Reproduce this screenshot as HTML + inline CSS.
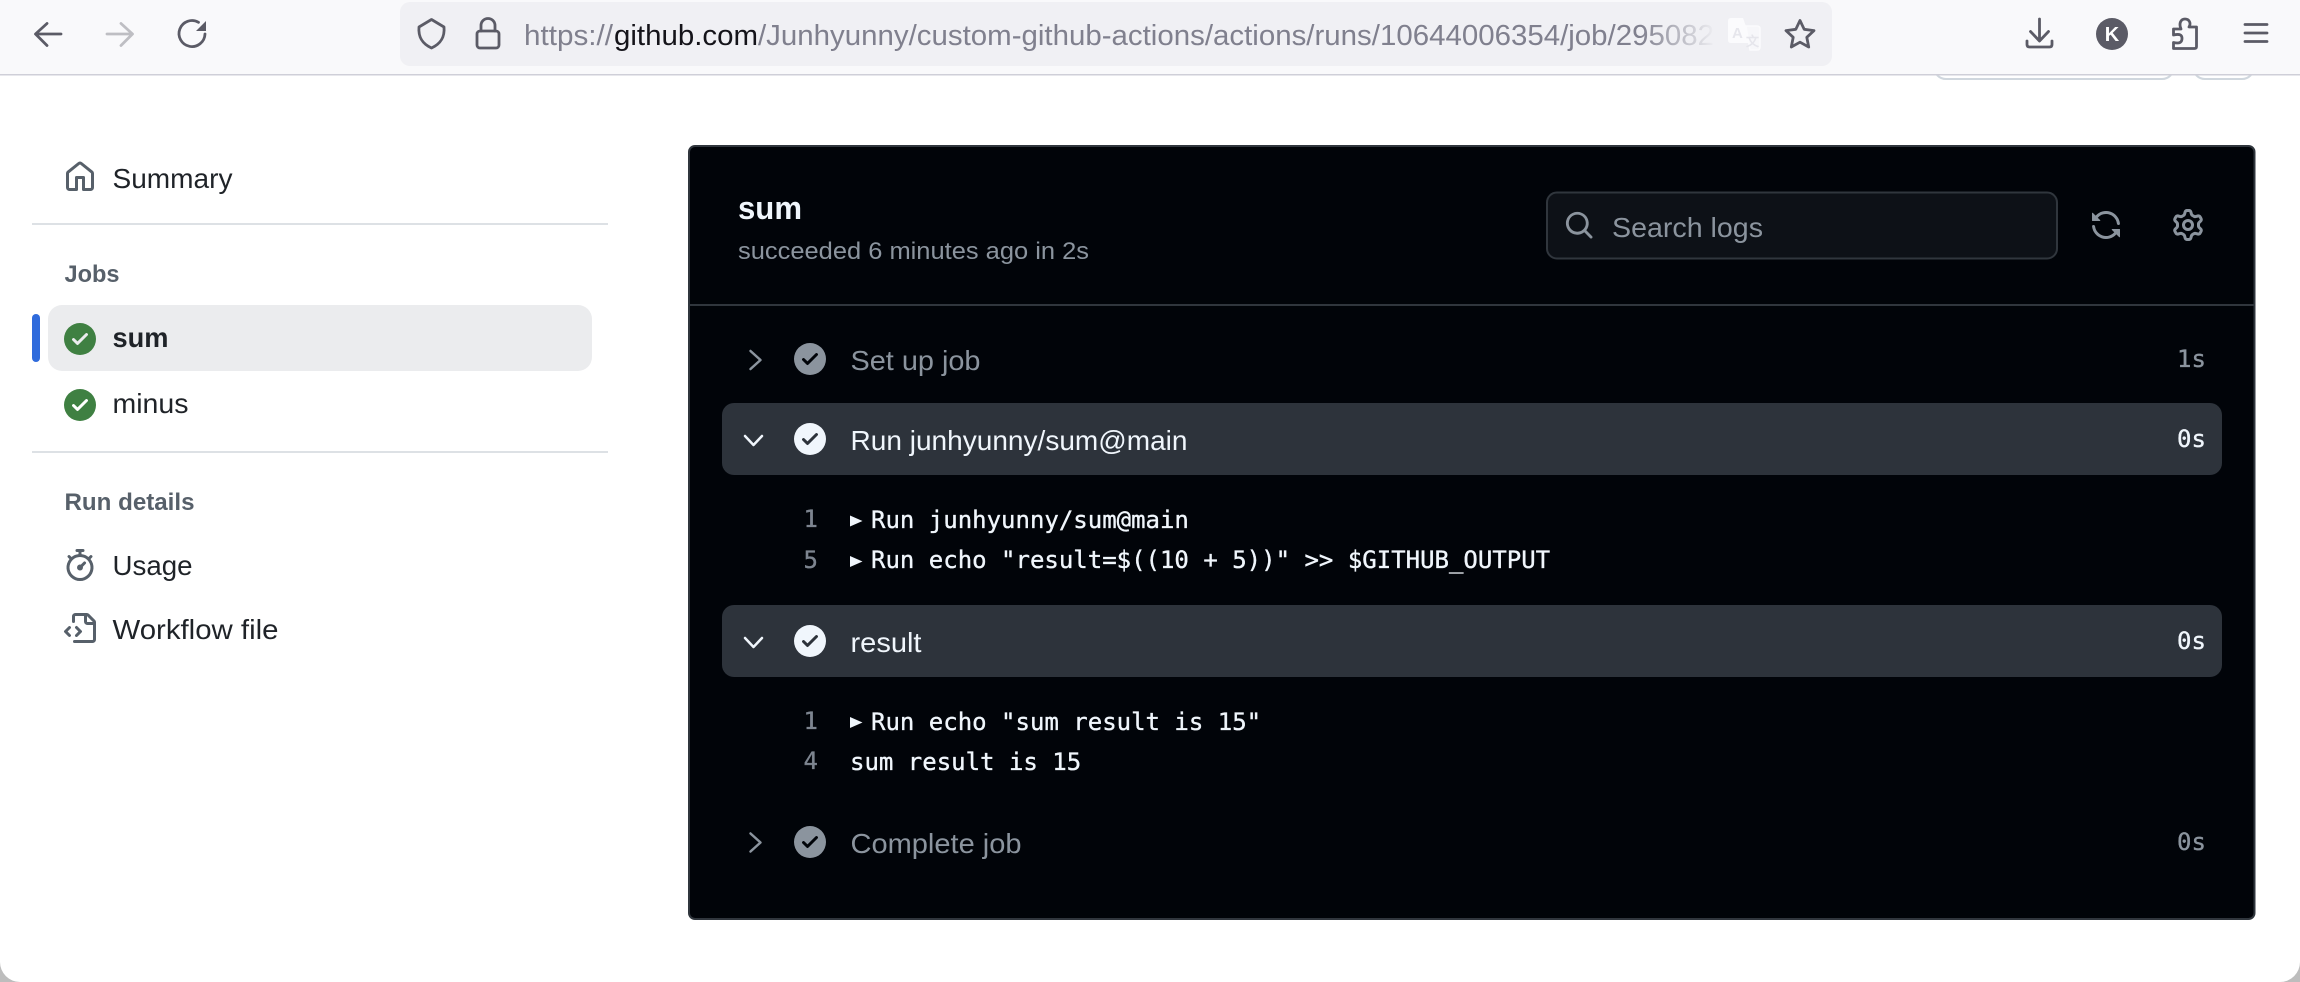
<!DOCTYPE html>
<html lang="en">
<head>
<meta charset="utf-8">
<title>sum · Junhyunny/custom-github-actions</title>
<style>
html,body{margin:0;padding:0;width:2300px;height:982px;overflow:hidden;background:#fff}
svg{display:block}
text{font-family:"Liberation Sans",sans-serif;white-space:pre}
.mono{font-family:"DejaVu Sans Mono","Liberation Mono",monospace;font-size:24px;stroke-width:.35}
.nav{font-size:28px;fill:#1f2328}
.head{font-size:24px;font-weight:700;fill:#57606a}
.step{font-size:28px}
.tb{fill:none;stroke:#5b5b66;stroke-width:2.8;stroke-linecap:round;stroke-linejoin:round}
.lg{fill:#f0f6fc;stroke:#f0f6fc}
.ln{fill:#7d8590;stroke:#7d8590}
.dim{fill:#8b949e;stroke:#8b949e}
</style>
</head>
<body>
<svg xmlns="http://www.w3.org/2000/svg" width="2300" height="982" viewBox="0 0 2300 982">
<defs>
<linearGradient id="fade" gradientUnits="userSpaceOnUse" x1="1640" y1="0" x2="1716" y2="0">
<stop offset="0" stop-color="#80808e"/><stop offset="1" stop-color="#f0f0f4"/>
</linearGradient>
<path id="chk" d="M8 16A8 8 0 1 1 8 0a8 8 0 0 1 0 16Zm3.78-9.72a.751.751 0 0 0-.018-1.042.751.751 0 0 0-1.042-.018L6.75 9.19 5.28 7.72a.751.751 0 0 0-1.042.018.751.751 0 0 0-.018 1.042l2 2a.75.75 0 0 0 1.06 0Z"/>
</defs>

<rect width="2300" height="982" fill="#fff"/>

<!-- page buttons peeking under the toolbar -->
<rect x="1934" y="40" width="240" height="39" rx="12" fill="#fff" stroke="#d0d7de" stroke-width="2"/>
<rect x="2193" y="40" width="61" height="39" rx="12" fill="#fff" stroke="#d0d7de" stroke-width="2"/>

<!-- browser toolbar -->
<rect width="2300" height="74" fill="#f9f9fb"/>
<rect y="74" width="2300" height="1.5" fill="#cfcfd8"/>
<g class="tb">
<path d="M36 34H61M47 23.5 35.5 34 47 45.5"/>
<path d="M107 34H132M121 23.5 132.5 34 121 45.5" stroke="#bebec3"/>
<path d="M198.500 22.300A13 13 0 1 0 205 34"/>
</g>
<path d="M206 21V31H196Z" fill="#5b5b66"/>

<!-- url bar -->
<rect x="400" y="2" width="1432" height="64" rx="10" fill="#f0f0f4"/>
<g class="tb">
<path d="M419 27 431.500 19.500 444 27C445 38 440 44 431.500 48C423 44 418 38 419 27Z"/>
<rect x="477" y="31" width="22" height="17" rx="3"/>
<path d="M481 31V25.500a7 7 0 0 1 14 0V31"/>
</g>
<text x="524" y="45" font-size="29" fill="#80808e" textLength="89" lengthAdjust="spacingAndGlyphs">https://</text>
<text x="614" y="45" font-size="29" fill="#15141a" textLength="144" lengthAdjust="spacingAndGlyphs">github.com</text>
<text x="758" y="45" font-size="29" fill="url(#fade)" textLength="956" lengthAdjust="spacingAndGlyphs">/Junhyunny/custom-github-actions/actions/runs/10644006354/job/295082</text>

<!-- translate icon -->
<path d="M1731 18H1743L1752 43H1731Q1728 43 1728 40V21Q1728 18 1731 18Z" fill="#fbfbfd"/>
<path d="M1746 26H1757Q1760 26 1760 29V47Q1760 50 1757 50H1750Z" fill="#f7f7fa" stroke="#fbfbfd" stroke-width="1.500"/>
<text x="1732" y="38" font-size="15" font-weight="700" fill="#e6e6ec">A</text>
<text x="1746" y="46" font-size="13" font-weight="700" fill="#e6e6ec">文</text>

<!-- star -->
<path class="tb" d="M1800 20.500 1804.200 29.300 1814 30.600 1806.800 37.300 1808.700 47 1800 42.200 1791.300 47 1793.200 37.300 1786 30.600 1795.800 29.300Z"/>

<!-- right toolbar -->
<g class="tb">
<path d="M2039.500 19V40M2030.500 31.500 2039.500 41 2048.500 31.500"/>
<path d="M2027 41V44.500Q2027 47 2029.500 47H2049.500Q2052 47 2052 44.500V41"/>
<path d="M2173.500 48.500V42.500C2180 44 2182 42 2182 38.500C2182 35 2180 33.500 2173.500 35V29H2181C2178.500 23 2181 19 2185 19C2189 19 2191.500 23 2189 27H2196.500V46.500Q2196.500 48.500 2194.500 48.500Z"/>
<path d="M2245 24.500H2267M2245 33H2267M2245 41.500H2267"/>
</g>
<circle cx="2112" cy="34" r="16" fill="#5b5b66"/>
<text x="2112" y="41" font-size="20" font-weight="700" fill="#fff" text-anchor="middle">K</text>

<!-- sidebar -->
<g transform="translate(64 161) scale(2)" fill="#57606a"><path d="M6.906.664a1.749 1.749 0 0 1 2.187 0l5.25 4.2c.415.332.657.835.657 1.367v7.019A1.75 1.75 0 0 1 13.25 15h-3.5a.75.75 0 0 1-.75-.75V9H7v5.25a.75.75 0 0 1-.75.75h-3.5A1.75 1.75 0 0 1 1 13.250V6.230c0-.531.242-1.034.657-1.366l5.250-4.200Zm1.250 1.171a.25.25 0 0 0-.312 0l-5.250 4.200a.25.25 0 0 0-.094.196v7.019c0 .138.112.25.25.25H5.500V8.250a.75.75 0 0 1 .75-.75h3.500a.75.75 0 0 1 .75.75v5.250h2.750a.25.25 0 0 0 .25-.25V6.230a.25.25 0 0 0-.094-.195Z"/></g>
<text class="nav" x="112.500" y="188" textLength="120" lengthAdjust="spacingAndGlyphs">Summary</text>
<rect x="32" y="223" width="576" height="2" fill="#dde1e5"/>
<text class="head" x="64.500" y="282" textLength="55" lengthAdjust="spacingAndGlyphs">Jobs</text>
<rect x="48" y="305" width="544" height="66" rx="14" fill="#ebecee"/>
<rect x="32" y="314" width="8" height="48" rx="4" fill="#2f6bdc"/>
<use href="#chk" transform="translate(64 323) scale(2)" fill="#3f8042"/>
<text class="nav" x="112.500" y="347" font-weight="700" textLength="56" lengthAdjust="spacingAndGlyphs">sum</text>
<use href="#chk" transform="translate(64 389) scale(2)" fill="#3f8042"/>
<text class="nav" x="112.500" y="413" textLength="76" lengthAdjust="spacingAndGlyphs">minus</text>
<rect x="32" y="451" width="576" height="2" fill="#dde1e5"/>
<text class="head" x="64.500" y="510" textLength="130" lengthAdjust="spacingAndGlyphs">Run details</text>
<g transform="translate(64 549) scale(2)" fill="#57606a"><path d="M5.750.750A.75.75 0 0 1 6.500 0h3a.75.75 0 0 1 0 1.500h-.75v1l-.001.041a6.724 6.724 0 0 1 3.464 1.435l.007-.006.75-.75a.751.751 0 0 1 1.042.018.751.751 0 0 1 .018 1.042l-.75.75-.006.007a6.750 6.750 0 1 1-10.548 0L2.720 5.030l-.75-.75a.751.751 0 0 1 .018-1.042.751.751 0 0 1 1.042-.018l.75.75.007.006A6.720 6.720 0 0 1 7.250 2.541V1.500H6.500a.75.75 0 0 1-.75-.75ZM8 14.500a5.250 5.250 0 1 0-.001-10.501A5.250 5.250 0 0 0 8 14.500Zm.389-6.700 1.330-1.330a.75.75 0 1 1 1.061 1.060L9.450 8.861A1.503 1.503 0 0 1 8 10.750a1.499 1.499 0 1 1 .389-2.950Z"/></g>
<text class="nav" x="112.500" y="575" textLength="80" lengthAdjust="spacingAndGlyphs">Usage</text>
<g transform="translate(64 613) scale(2)" fill="#57606a"><path d="M4 1.750C4 .784 4.784 0 5.750 0h5.586c.464 0 .909.184 1.237.513l2.914 2.914c.329.328.513.773.513 1.237v8.586A1.750 1.750 0 0 1 14.250 15h-9a.75.75 0 0 1 0-1.500h9a.25.25 0 0 0 .25-.25V6h-2.750A1.750 1.750 0 0 1 10 4.250V1.500H5.750a.25.25 0 0 0-.25.25v2.500a.75.75 0 0 1-1.500 0Zm1.720 4.970a.75.75 0 0 1 1.060 0l2 2a.75.75 0 0 1 0 1.060l-2 2a.749.749 0 0 1-1.275-.326.749.749 0 0 1 .215-.734l1.470-1.470-1.470-1.470a.75.75 0 0 1 0-1.060ZM3.280 7.780 1.810 9.250l1.470 1.470a.751.751 0 0 1-.018 1.042.751.751 0 0 1-1.042.018l-2-2a.75.75 0 0 1 0-1.060l2-2a.751.751 0 0 1 1.042.018.751.751 0 0 1 .018 1.042Zm8.220-6.218V4.250c0 .138.112.25.25.25h2.688l-.011-.013-2.914-2.914-.013-.011Z"/></g>
<text class="nav" x="112.500" y="639" textLength="166" lengthAdjust="spacingAndGlyphs">Workflow file</text>

<!-- log panel -->
<rect x="689" y="146" width="1565.500" height="773" rx="6" fill="#010409" stroke="#30363d" stroke-width="2"/>
<text x="738" y="219" font-size="32" font-weight="700" fill="#f0f6fc" textLength="64" lengthAdjust="spacingAndGlyphs">sum</text>
<text x="738" y="259" font-size="24" fill="#8b949e" textLength="351" lengthAdjust="spacingAndGlyphs">succeeded 6 minutes ago in 2s</text>
<rect x="690" y="304" width="1564" height="2" fill="#30363d"/>

<!-- search -->
<rect x="1547" y="192.500" width="510" height="66" rx="10" fill="#0d1117" stroke="#30363d" stroke-width="2"/>
<g transform="translate(1564 210) scale(1.900)" fill="#8b949e"><path d="M10.680 11.740a6 6 0 0 1-7.922-8.982 6 6 0 0 1 8.982 7.922l3.040 3.040a.749.749 0 0 1-.326 1.275.749.749 0 0 1-.734-.215ZM11.500 7a4.499 4.499 0 1 0-8.997 0A4.499 4.499 0 0 0 11.500 7Z"/></g>
<text x="1612" y="237" font-size="28" fill="#8b949e" textLength="151" lengthAdjust="spacingAndGlyphs">Search logs</text>
<g transform="translate(2090 209) scale(2)" fill="#8b949e"><path d="M1.705 8.005a.75.75 0 0 1 .834.656 5.500 5.500 0 0 0 9.592 2.970l-1.204-1.204a.25.25 0 0 1 .177-.427h3.646a.25.25 0 0 1 .25.25v3.646a.25.25 0 0 1-.427.177l-1.380-1.380A7.002 7.002 0 0 1 1.050 8.840a.75.75 0 0 1 .656-.834ZM8 2.500a5.487 5.487 0 0 0-4.131 1.869l1.204 1.204A.25.25 0 0 1 4.896 6H1.250A.25.25 0 0 1 1 5.750V2.104a.25.25 0 0 1 .427-.177l1.380 1.380A7.002 7.002 0 0 1 14.950 7.160a.75.75 0 0 1-1.490.178A5.500 5.500 0 0 0 8 2.500Z"/></g>
<g transform="translate(2172 209) scale(2)" fill="#8b949e"><path d="M8 0a8.200 8.200 0 0 1 .701.031C9.444.095 9.990.645 10.160 1.290l.288 1.107c.018.066.079.158.212.224.231.114.454.243.668.386.123.082.233.09.299.071l1.103-.303c.644-.176 1.392.021 1.820.63.27.385.506.792.704 1.218.315.675.111 1.422-.364 1.891l-.814.806c-.049.048-.098.147-.088.294.016.257.016.515 0 .772-.01.147.038.246.088.294l.814.806c.475.469.679 1.216.364 1.891a7.977 7.977 0 0 1-.704 1.217c-.428.61-1.176.807-1.820.63l-1.102-.302c-.067-.019-.177-.011-.3.071a5.909 5.909 0 0 1-.668.386c-.133.066-.194.158-.211.224l-.29 1.106c-.168.646-.715 1.196-1.458 1.260a8.006 8.006 0 0 1-1.402 0c-.743-.064-1.289-.614-1.458-1.260l-.289-1.106c-.018-.066-.079-.158-.212-.224a5.738 5.738 0 0 1-.668-.386c-.123-.082-.233-.09-.299-.071l-1.103.303c-.644.176-1.392-.021-1.820-.63a8.120 8.120 0 0 1-.704-1.218c-.315-.675-.111-1.422.363-1.891l.815-.806c.05-.048.098-.147.088-.294a6.214 6.214 0 0 1 0-.772c.01-.147-.038-.246-.088-.294l-.815-.806C.635 6.045.431 5.298.746 4.623a7.920 7.920 0 0 1 .704-1.217c.428-.61 1.176-.807 1.820-.63l1.102.302c.067.019.177.011.3-.071.214-.143.437-.272.668-.386.133-.066.194-.158.211-.224l.29-1.106C6.009.645 6.556.095 7.299.030 7.530.010 7.764 0 8 0Zm-.571 1.525c-.036.003-.108.036-.137.146l-.289 1.105c-.147.561-.549.967-.998 1.189-.173.086-.34.183-.5.29-.417.278-.97.423-1.529.27l-1.103-.303c-.109-.03-.175.016-.195.045-.22.312-.412.644-.573.99-.014.031-.021.11.059.19l.815.806c.411.406.562.957.53 1.456a4.709 4.709 0 0 0 0 .582c.032.499-.119 1.050-.53 1.456l-.815.806c-.081.08-.073.159-.059.19.162.346.353.677.573.989.02.03.085.076.195.046l1.102-.303c.56-.153 1.113-.008 1.530.27.161.107.328.204.501.29.447.222.85.629.997 1.189l.289 1.105c.029.109.101.143.137.146a6.600 6.600 0 0 0 1.142 0c.036-.003.108-.036.137-.146l.289-1.105c.147-.561.549-.967.998-1.189.173-.086.34-.183.5-.29.417-.278.97-.423 1.529-.27l1.103.303c.109.029.175-.016.195-.045.22-.313.411-.644.573-.99.014-.031.021-.11-.059-.19l-.815-.806c-.411-.406-.562-.957-.53-1.456a4.709 4.709 0 0 0 0-.582c-.032-.499.119-1.050.53-1.456l.815-.806c.081-.08.073-.159.059-.19a6.464 6.464 0 0 0-.573-.989c-.02-.03-.085-.076-.195-.046l-1.102.303c-.56.153-1.113.008-1.530-.27a4.440 4.440 0 0 0-.501-.29c-.447-.222-.85-.629-.997-1.189l-.289-1.105c-.029-.11-.101-.143-.137-.146a6.600 6.600 0 0 0-1.142 0ZM11 8a3 3 0 1 1-6 0 3 3 0 0 1 6 0ZM9.500 8a1.500 1.500 0 1 0-3.001.001A1.500 1.500 0 0 0 9.500 8Z"/></g>

<!-- step: Set up job -->
<path d="M750.500 351 760.500 360 750.500 369" fill="none" stroke="#8b949e" stroke-width="2.500" stroke-linecap="round" stroke-linejoin="round"/>
<use href="#chk" transform="translate(794 343) scale(2)" fill="#8b949e"/>
<text class="step" x="850.500" y="370" fill="#8b949e" textLength="130" lengthAdjust="spacingAndGlyphs">Set up job</text>
<text class="mono dim" x="2177" y="367">1s</text>

<!-- step: Run -->
<rect x="722" y="403" width="1500" height="72" rx="12" fill="#2d333b"/>
<path d="M745 436 753.500 445 762 436" fill="none" stroke="#f0f6fc" stroke-width="2.500" stroke-linecap="round" stroke-linejoin="round"/>
<use href="#chk" transform="translate(794 423) scale(2)" fill="#f0f6fc"/>
<text class="step" x="850.500" y="450" fill="#f0f6fc" textLength="337" lengthAdjust="spacingAndGlyphs">Run junhyunny/sum@main</text>
<text class="mono lg" x="2177" y="447">0s</text>

<!-- logs -->
<text class="mono ln" x="803.500" y="527">1</text>
<path d="M850 515.500 862.500 521 850 526.500Z" fill="#f0f6fc"/>
<text class="mono lg" x="871" y="528">Run junhyunny/sum@main</text>
<text class="mono ln" x="803.500" y="568">5</text>
<path d="M850 556 862.500 561.500 850 567Z" fill="#f0f6fc"/>
<text class="mono lg" x="871" y="568">Run echo "result=$((10 + 5))" &gt;&gt; $GITHUB_OUTPUT</text>

<!-- step: result -->
<rect x="722" y="605" width="1500" height="72" rx="12" fill="#2d333b"/>
<path d="M745 638 753.500 647 762 638" fill="none" stroke="#f0f6fc" stroke-width="2.500" stroke-linecap="round" stroke-linejoin="round"/>
<use href="#chk" transform="translate(794 625) scale(2)" fill="#f0f6fc"/>
<text class="step" x="850.500" y="652" fill="#f0f6fc" textLength="71" lengthAdjust="spacingAndGlyphs">result</text>
<text class="mono lg" x="2177" y="649">0s</text>

<text class="mono ln" x="803.500" y="729">1</text>
<path d="M850 717 862.500 722.500 850 728Z" fill="#f0f6fc"/>
<text class="mono lg" x="871" y="730">Run echo "sum result is 15"</text>
<text class="mono ln" x="803.500" y="769">4</text>
<text class="mono lg" x="850" y="770">sum result is 15</text>

<!-- step: Complete job -->
<path d="M750.500 833.500 760.500 842.500 750.500 851.500" fill="none" stroke="#8b949e" stroke-width="2.500" stroke-linecap="round" stroke-linejoin="round"/>
<use href="#chk" transform="translate(794 826) scale(2)" fill="#8b949e"/>
<text class="step" x="850.500" y="853" fill="#8b949e" textLength="171" lengthAdjust="spacingAndGlyphs">Complete job</text>
<text class="mono dim" x="2177" y="850">0s</text>

<!-- window corners -->
<path d="M0 962V982H20A20 20 0 0 1 0 962Z" fill="#bdbdbd"/>
<path d="M2300 962V982H2280A20 20 0 0 0 2300 962Z" fill="#bdbdbd"/>
</svg>
</body>
</html>
